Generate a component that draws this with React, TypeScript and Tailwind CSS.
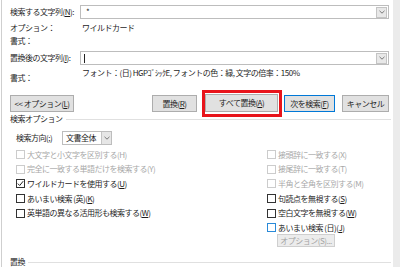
import React from "react";

const Chevron = () => (
  <svg width="6" height="4" viewBox="0 0 6 4" fill="none">
    <polyline points="0.5,0.8 3,3.2 5.5,0.8" stroke="#6d6d6d" strokeWidth="0.9" />
  </svg>
);

const Check = ({ checked, disabled, blue }: { checked?: boolean; disabled?: boolean; blue?: boolean }) => (
  <div
    className={
      "w-[9px] h-[9px] shrink-0 border bg-white flex items-center justify-center " +
      (disabled ? "border-[#cccccc]" : blue ? "border-[#2a8ad8]" : "border-[#333333]")
    }
  >
    {checked && (
      <svg width="7" height="7" viewBox="0 0 7 7" fill="none">
        <polyline points="0.8,3.6 2.7,5.5 6.2,1.2" stroke="#222" strokeWidth="1" />
      </svg>
    )}
  </div>
);

const CbRow = ({
  children,
  checked,
  disabled,
  blue,
}: {
  children: React.ReactNode;
  checked?: boolean;
  disabled?: boolean;
  blue?: boolean;
}) => (
  <div className="h-[14.6px] flex items-center gap-[2px]">
    <Check checked={checked} disabled={disabled} blue={blue} />
    <span className={"whitespace-nowrap " + (disabled ? "text-[#a8a8a8]" : "")}>{children}</span>
  </div>
);

const Btn = ({ children, w, extra }: { children: React.ReactNode; w: string; extra?: string }) => (
  <div
    className={
      "h-[17px] shrink-0 bg-[#e1e1e1] border flex items-center justify-center whitespace-nowrap " +
      w +
      " " +
      (extra ?? "border-[#adadad]")
    }
  >
    {children}
  </div>
);

export default function App() {
  return (
    <div className="w-[400px] h-[267px] bg-white flex overflow-hidden text-[8px] leading-[10px] tracking-[-0.5px] text-[#1e1e1e] font-['Noto_Sans_CJK_JP','Noto_Sans',sans-serif]">
      <div className="w-[2px] shrink-0 border-r border-[#cfcfcf]" />
      <div className="flex-1 flex flex-col pl-[8px] pr-[4px]">
        {/* Find what */}
        <div className="mt-[5px] h-[14px] flex items-center">
          <div className="w-[70px] shrink-0 whitespace-nowrap">
            検索する文字列(<u>N</u>):
          </div>
          <div className="flex-1 h-full border border-[#bdbdbd] flex items-center pl-[5px]">
            <span>*</span>
            <div className="ml-auto mr-[1px] w-[11px] h-[11px] bg-[#e8e8e8] border border-[#c4c4c4] flex items-center justify-center">
              <Chevron />
            </div>
          </div>
        </div>
        <div className="mt-[2px] h-[13px] flex items-center">
          <div className="w-[70px] shrink-0">オプション：</div>
          <div className="pl-[2px]">ワイルドカード</div>
        </div>
        <div className="h-[13px] flex items-center">
          <div className="w-[70px] shrink-0">書式：</div>
        </div>
        {/* Replace with */}
        <div className="mt-[4px] h-[14px] flex items-center">
          <div className="w-[70px] shrink-0 whitespace-nowrap">
            置換後の文字列(<u>I</u>):
          </div>
          <div className="flex-1 h-full border border-[#bdbdbd] flex items-center pl-[3px]">
            <div className="w-px h-[9px] bg-[#222]" />
            <div className="ml-auto mr-[1px] w-[11px] h-[11px] bg-[#e8e8e8] border border-[#c4c4c4] flex items-center justify-center">
              <Chevron />
            </div>
          </div>
        </div>
        <div className="h-[20px] flex items-start">
          <div className="w-[70px] shrink-0 mt-[8px]">書式：</div>
          <div className="pl-[2px] mt-[3px] whitespace-nowrap">
            フォント：(日) HGPｺﾞｼｯｸE, フォントの色：緑, 文字の倍率：150%
          </div>
        </div>
        {/* Buttons */}
        <div className="mt-[5px] h-[27px] flex items-center">
          <Btn w="w-[64px]">
            {"<< "}オプション(<u>L</u>)
          </Btn>
          <div className="ml-[78px]">
            <Btn w="w-[45px]">
              置換(<u>R</u>)
            </Btn>
          </div>
          <div className="ml-[5px] w-[80px] h-[27px] shrink-0 border-[3px] border-[#e8141b] pt-[1px]">
            <div className="w-[73px] h-[18px] bg-[#e1e1e1] border border-[#adadad] flex items-center justify-center whitespace-nowrap">
              すべて置換(<u>A</u>)
            </div>
          </div>
          <div className="ml-[2px]">
            <Btn w="w-[51px]" extra="border-[#0078d7]">
              次を検索(<u>F</u>)
            </Btn>
          </div>
          <div className="ml-[7px]">
            <Btn w="w-[47px]">キャンセル</Btn>
          </div>
        </div>
        {/* Search options group */}
        <div className="-mt-[3px] h-[10px] flex items-center">
          <span className="whitespace-nowrap">検索オプション</span>
          <div className="flex-1 h-px bg-[#e0e0e0] ml-[3px] mr-[-2px]" />
        </div>
        <div className="mt-[7px] h-[14px] flex items-center pl-[6px]">
          <div className="w-[46px] shrink-0 whitespace-nowrap">
            検索方向(<u>;</u>)
          </div>
          <div className="w-[50px] h-[14px] border border-[#bdbdbd] flex">
            <div className="flex-1 flex items-center pl-[3px]">文書全体</div>
            <div className="w-[10px] bg-[#e6e6e6] border-l border-[#c4c4c4] flex items-center justify-center">
              <Chevron />
            </div>
          </div>
        </div>
        <div className="mt-[2.5px] flex">
          <div className="w-[257px] shrink-0 pl-[6px] flex flex-col">
            <CbRow disabled>大文字と小文字を区別する(H)</CbRow>
            <CbRow disabled>完全に一致する単語だけを検索する(Y)</CbRow>
            <CbRow checked>
              ワイルドカードを使用する(<u>U</u>)
            </CbRow>
            <CbRow>
              あいまい検索 (英)(<u>K</u>)
            </CbRow>
            <CbRow>
              英単語の異なる活用形も検索する(<u>W</u>)
            </CbRow>
          </div>
          <div className="flex-1 flex flex-col">
            <CbRow disabled>接頭辞に一致する(X)</CbRow>
            <CbRow disabled>接尾辞に一致する(T)</CbRow>
            <CbRow disabled>半角と全角を区別する(M)</CbRow>
            <CbRow>
              句読点を無視する(<u>S</u>)
            </CbRow>
            <CbRow>
              空白文字を無視する(<u>W</u>)
            </CbRow>
            <CbRow blue>
              あいまい検索 (日)(<u>J</u>)
            </CbRow>
            <div className="-mt-[1px] ml-[10px] w-[58px] h-[13px] bg-[#ececec] border border-[#cfcfcf] text-[#a3a3a3] flex items-center justify-center whitespace-nowrap">
              オプション(S)...
            </div>
          </div>
        </div>
        {/* Replace group */}
        <div className="mt-auto h-[10px] flex items-center">
          <span className="whitespace-nowrap">置換</span>
          <div className="flex-1 h-px bg-[#e0e0e0] ml-[3px] mr-[-2px]" />
        </div>
      </div>
      <div className="w-[7px] shrink-0 bg-[#ebebeb]" />
    </div>
  );
}
